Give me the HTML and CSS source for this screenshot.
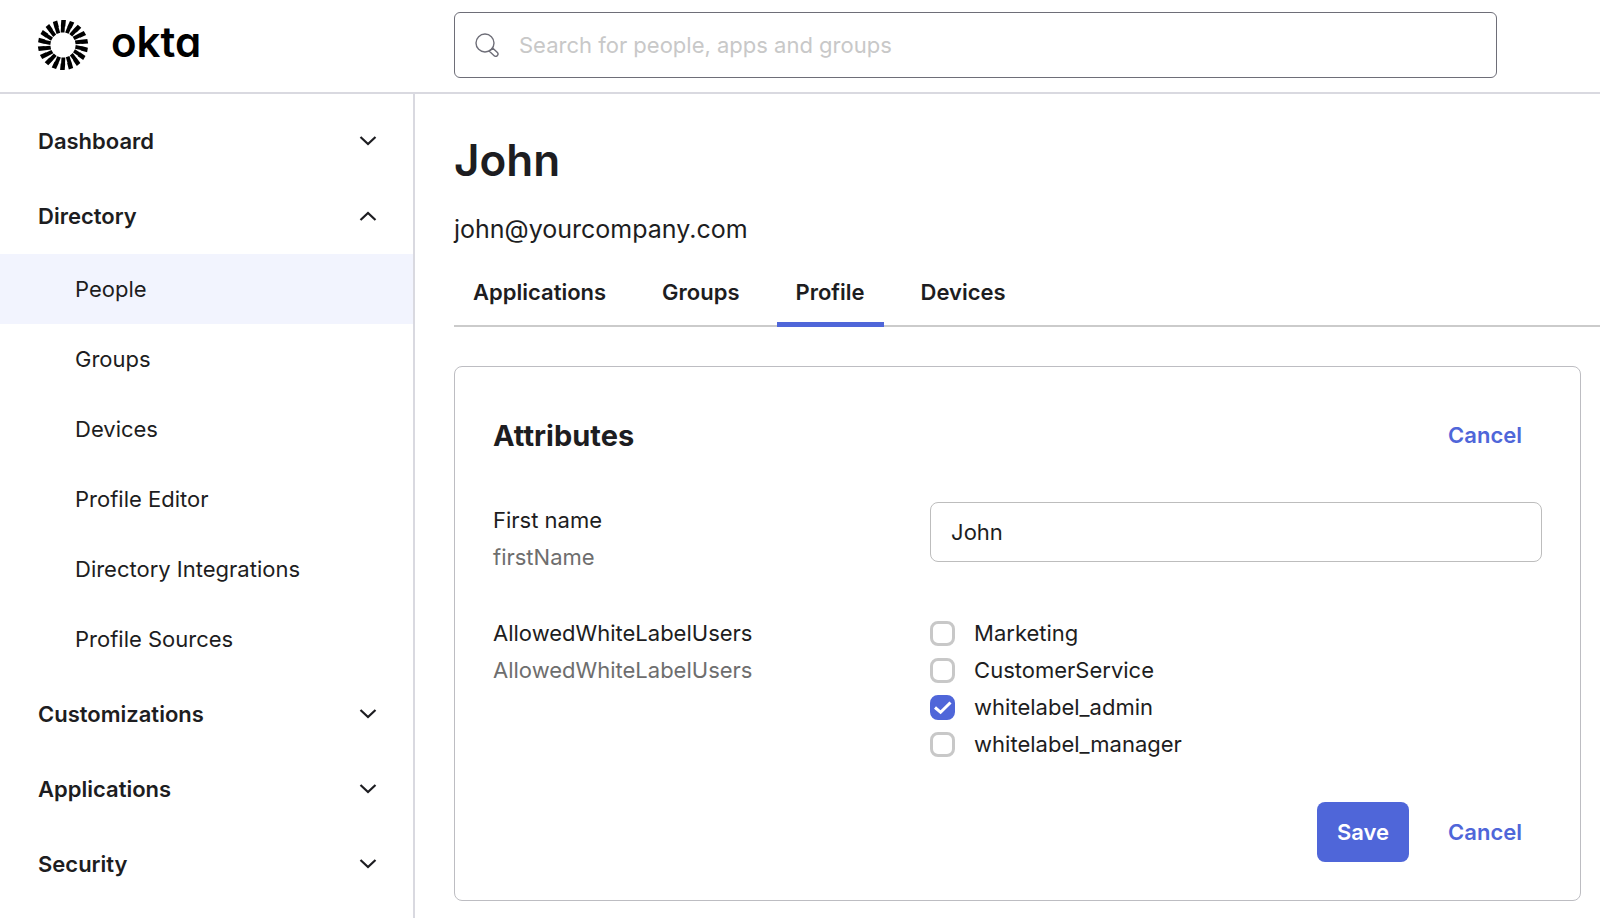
FILE: index.html
```html
<!DOCTYPE html>
<html lang="en">
<head>
  <meta charset="UTF-8">
  <meta name="viewport" content="width=device-width, initial-scale=1.0">
  <title>John - Profile</title>
  <link rel="stylesheet" href="styles.css">
</head>
<body>
  <svg class="sprite" width="0" height="0" aria-hidden="true">
    <symbol id="chevron" viewBox="0 0 18 12">
      <path d="M1.5 2 9 9 16.5 2" fill="none" stroke="currentColor" stroke-width="2.2"/>
    </symbol>
  </svg>

  <header class="header">
    <a class="logo" href="#">
      <svg class="logo-mark" viewBox="-26 -26 52 52" aria-hidden="true">
        <defs>
          <path id="ray" d="M-1.7-25H2.9L2.3-18.4H1.9L1.5-12.5H-2.3L-2-18.4H-2.2Z"/>
          <g id="rays"><use href="#ray"/><use href="#ray" transform="rotate(20)"/><use href="#ray" transform="rotate(40)"/></g>
        </defs>
        <use href="#rays"/>
        <use href="#rays" transform="rotate(60)"/>
        <use href="#rays" transform="rotate(120)"/>
        <use href="#rays" transform="rotate(180)"/>
        <use href="#rays" transform="rotate(240)"/>
        <use href="#rays" transform="rotate(300)"/>
      </svg>
      <span class="logo-text">okta</span>
    </a>
    <div class="search">
      <svg class="search-icon" viewBox="0 0 24 24" aria-hidden="true">
        <g fill="none" stroke="currentColor" stroke-width="1.4">
          <circle cx="10" cy="10" r="9"/>
          <path d="M14.4 18.2 17.8 15.2 22.4 19.5C24.2 21.5 21.6 24.4 19.4 22.9Z"/>
        </g>
      </svg>
      <input type="search" aria-label="Search" placeholder="Search for people, apps and groups">
    </div>
  </header>

  <div class="layout">
    <nav class="sidebar">
      <button class="nav-group" type="button">Dashboard <svg class="chevron"><use href="#chevron"/></svg></button>
      <button class="nav-group open" type="button">Directory <svg class="chevron"><use href="#chevron"/></svg></button>
      <div class="nav-items">
        <a class="active" href="#">People</a>
        <a href="#">Groups</a>
        <a href="#">Devices</a>
        <a href="#">Profile Editor</a>
        <a href="#">Directory Integrations</a>
        <a href="#">Profile Sources</a>
      </div>
      <button class="nav-group" type="button">Customizations <svg class="chevron"><use href="#chevron"/></svg></button>
      <button class="nav-group" type="button">Applications <svg class="chevron"><use href="#chevron"/></svg></button>
      <button class="nav-group" type="button">Security <svg class="chevron"><use href="#chevron"/></svg></button>
    </nav>

    <main class="content">
      <h1>John</h1>
      <p class="email">john@yourcompany.com</p>
      <div class="tabs">
        <a href="#">Applications</a>
        <a href="#">Groups</a>
        <a class="active" href="#">Profile</a>
        <a href="#">Devices</a>
      </div>

      <form class="card">
        <div class="card-header">
          <h2>Attributes</h2>
          <button class="btn" type="button">Cancel</button>
        </div>

        <div class="row">
          <label for="firstName">First name <span class="hint">firstName</span></label>
          <input class="text" id="firstName" type="text" value="John">
        </div>

        <div class="row">
          <div id="allowedUsers">AllowedWhiteLabelUsers <span class="hint">AllowedWhiteLabelUsers</span></div>
          <div class="checks" role="group" aria-labelledby="allowedUsers">
            <label><input type="checkbox"> Marketing</label>
            <label><input type="checkbox"> CustomerService</label>
            <label>
              <input type="checkbox" checked>
              <svg class="tick" viewBox="0 0 25 25" aria-hidden="true"><path d="M5 12.5 10.6 17.3 20.5 7.5"/></svg>
              whitelabel_admin
            </label>
            <label><input type="checkbox"> whitelabel_manager</label>
          </div>
        </div>

        <div class="actions">
          <button class="btn primary" type="submit">Save</button>
          <button class="btn" type="button">Cancel</button>
        </div>
      </form>
    </main>
  </div>
</body>
</html>
```
FILE: styles.css
```css
* {
  box-sizing: border-box;
}
body {
  margin: 0;
  min-height: 100vh;
  display: flex;
  flex-direction: column;
  font-family: Inter, "Liberation Sans", sans-serif;
  font-size: 22px;
  color: #1d1d21;
  background: #fff;
}
h1, h2, p {
  margin: 0;
}
a {
  color: inherit;
  text-decoration: none;
}
input, button {
  font: inherit;
  color: inherit;
}
button {
  border: none;
  background: none;
  cursor: pointer;
}
.sprite {
  position: absolute;
}

/* header */
.header {
  display: grid;
  grid-template-columns: 415px 1fr;
  align-items: center;
  height: 94px;
  padding-bottom: 2px;
  border-bottom: 2px solid #d9d9e0;
}
.logo {
  display: flex;
  align-items: center;
  gap: 22px;
  padding-left: 37px;
  color: #000;
}
.logo-mark {
  width: 52px;
  height: 52px;
}
.logo-text {
  font-size: 42px;
  font-weight: 600;
  font-feature-settings: "cv11";
  line-height: 52px;
  padding-bottom: 6px;
}
.search {
  display: flex;
  align-items: center;
  gap: 20px;
  height: 66px;
  margin: 0 103px 0 39px;
  padding: 0 20px;
  border: 1px solid #6e6e78;
  border-radius: 6px;
}
.search-icon {
  width: 24px;
  height: 24px;
  color: #6e6e78;
}
.search input {
  flex: 1;
  padding: 0;
  border: none;
  outline: none;
}
.search input::placeholder {
  color: #c8c8c8;
}

/* sidebar */
.layout {
  flex: 1;
  display: grid;
  grid-template-columns: 415px 1fr;
}
.sidebar {
  padding-top: 9px;
  border-right: 2px solid #d9d9e0;
}
.nav-group {
  display: flex;
  align-items: center;
  justify-content: space-between;
  width: 100%;
  height: 75px;
  padding: 0 36px 0 38px;
  font-weight: 600;
}
.chevron {
  width: 18px;
  height: 12px;
}
.open .chevron {
  transform: rotate(180deg);
}
.nav-items {
  padding: 1px 0 2px;
}
.nav-items a {
  display: block;
  padding-left: 75px;
  line-height: 70px;
}
.nav-items .active {
  background: #f2f4fe;
}

/* content */
.content {
  padding: 36px 0 16px 39px;
}
h1 {
  font-size: 44px;
  font-weight: 600;
  line-height: 60px;
}
.email {
  margin-top: 20px;
  font-size: 25px;
  line-height: 38px;
}
.tabs {
  display: flex;
  gap: 18px;
  margin-top: 18px;
  border-bottom: 2px solid #cbcbcb;
}
.tabs a {
  margin-bottom: -2px;
  padding: 7px 19px 11px;
  font-weight: 600;
  line-height: 38px;
  border-bottom: 5px solid transparent;
}
.tabs .active {
  border-color: #4f66d9;
}

/* attributes card */
.card {
  margin: 39px 19px 0 0;
  padding: 38px;
  border: 1px solid #bdbdc2;
  border-radius: 8px;
}
.card-header {
  display: flex;
  align-items: center;
  justify-content: space-between;
  margin-bottom: 37px;
}
h2 {
  font-size: 29px;
  font-weight: 700;
}
.row {
  display: grid;
  grid-template-columns: 5fr 7fr;
  margin-bottom: 39px;
  line-height: 37px;
}
.hint {
  display: block;
  color: #6e6e6e;
}
.text {
  width: 100%;
  height: 60px;
  padding: 0 20px;
  border: 1px solid #bdbdbd;
  border-radius: 8px;
}
.checks label {
  display: flex;
  align-items: center;
  gap: 19px;
  position: relative;
}
.checks input {
  appearance: none;
  width: 25px;
  height: 25px;
  margin: 0;
  border: 3px solid #c8c8c8;
  border-radius: 8px;
}
.checks input:checked {
  border-color: #4f66d9;
  background: #4f66d9;
}
.tick {
  position: absolute;
  left: 0;
  width: 25px;
  height: 25px;
  fill: none;
  stroke: #fff;
  stroke-width: 3;
}
.actions {
  display: flex;
  justify-content: flex-end;
  gap: 19px;
}
.btn {
  height: 60px;
  padding: 0 20px;
  border-radius: 8px;
  font-weight: 600;
  color: #4f66d9;
}
.btn.primary {
  color: #fff;
  background: #4f66d9;
}
```
